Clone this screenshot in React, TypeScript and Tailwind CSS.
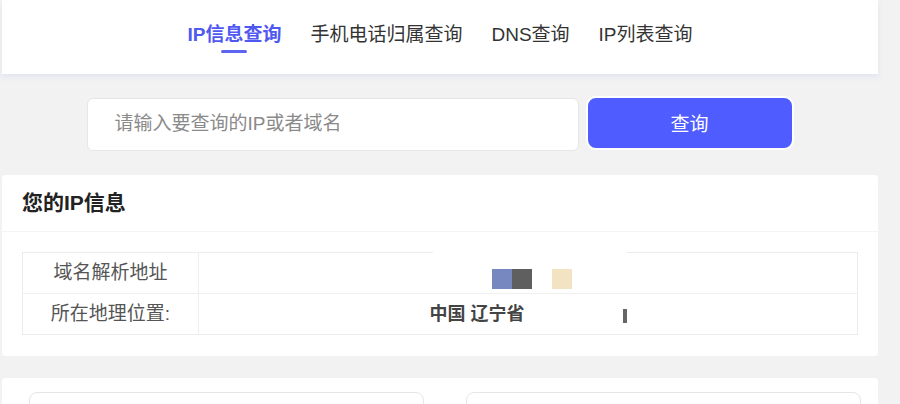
import React from "react";

const tabs = [
  { label: "IP信息查询", active: true },
  { label: "手机电话归属查询", active: false },
  { label: "DNS查询", active: false },
  { label: "IP列表查询", active: false },
];

const font = "font-['Liberation_Sans','Noto_Sans_CJK_SC',sans-serif]";

export default function App() {
  return (
    <div className={`min-h-screen bg-[#f2f2f2] ${font}`}>
      <div className="w-[876px] ml-[2px]">
        {/* top tabs */}
        <header className="h-[74px] bg-white flex items-start justify-center gap-[29px] pt-[22px] shadow-[0_3px_5px_rgba(225,226,240,0.9)]">
          {tabs.map((t) => (
            <div key={t.label} className="flex flex-col items-center">
              <span
                className={
                  t.active
                    ? "text-[19px] leading-[25px] font-bold text-[#5058f2]"
                    : "text-[19px] leading-[25px] text-[#333]"
                }
              >
                {t.label}
              </span>
              {t.active && <span className="mt-[3px] h-[3px] w-[26px] rounded-full bg-[#5c64f0]" />}
            </div>
          ))}
        </header>

        {/* search */}
        <div className="flex justify-center items-start gap-[7px] pt-[22px]">
          <div className="mt-[2px] h-[53px] w-[492px] rounded-[6px] border border-[#e6e6e6] bg-white flex items-center pl-[27px]">
            <span className="text-[19px] text-[#8a8a8a]">请输入要查询的IP或者域名</span>
          </div>
          <button className="h-[54px] w-[208px] rounded-[10px] border-2 border-white bg-[#4f5cff] text-white text-[19px] pt-[5px]">
            查询
          </button>
        </div>

        {/* info card */}
        <section className="mt-[24px] rounded-[4px] bg-white">
          <div className="h-[57px] flex items-center px-[20px] border-b border-[#f4f4f4]">
            <h2 className="text-[21px] font-bold text-[#222]">您的IP信息</h2>
          </div>
          <div className="px-[20px] pt-[20px] pb-[21px]">
            <div className="relative border border-[#ececec] text-[19px]">
              <div className="flex h-[41px] border-b border-[#efefef]">
                <div className="w-[176px] shrink-0 border-r border-[#efefef] flex items-center justify-center text-[#555]">
                  域名解析地址
                </div>
                <div className="flex-1 flex items-center justify-center pl-[8px]">
                  <span className="mt-[12px] flex">
                    <span className="h-[20px] w-[20px] bg-[#7787bf]" />
                    <span className="h-[20px] w-[20px] bg-[#5f5f60]" />
                    <span className="h-[20px] w-[20px]" />
                    <span className="h-[20px] w-[20px] bg-[#f2e3c3]" />
                  </span>
                </div>
              </div>
              <div className="flex h-[40px]">
                <div className="w-[176px] shrink-0 border-r border-[#efefef] flex items-center justify-center text-[#555]">
                  所在地理位置:
                </div>
                <div className="flex-1 flex items-center justify-center">
                  <span className="font-bold text-[18px] text-[#444]">中国 辽宁省</span>
                  <span className="w-[98px]" />
                  <span className="mt-[4px] h-[14px] w-[4px] bg-[#666]" />
                </div>
              </div>
              {/* redacted strip over top border */}
              <span className="absolute top-[-1px] left-[410px] h-[2px] w-[194px] bg-white" />
            </div>
          </div>
        </section>

        {/* lower panel */}
        <section className="mt-[22px] rounded-[4px] bg-white grid grid-cols-2 gap-[42px] pl-[27px] pr-[17px] pt-[14px] pb-[20px]">
          <div className="h-[220px] rounded-[8px] border border-[#e6e6e6]" />
          <div className="h-[220px] rounded-[8px] border border-[#e6e6e6]" />
        </section>
      </div>
    </div>
  );
}
